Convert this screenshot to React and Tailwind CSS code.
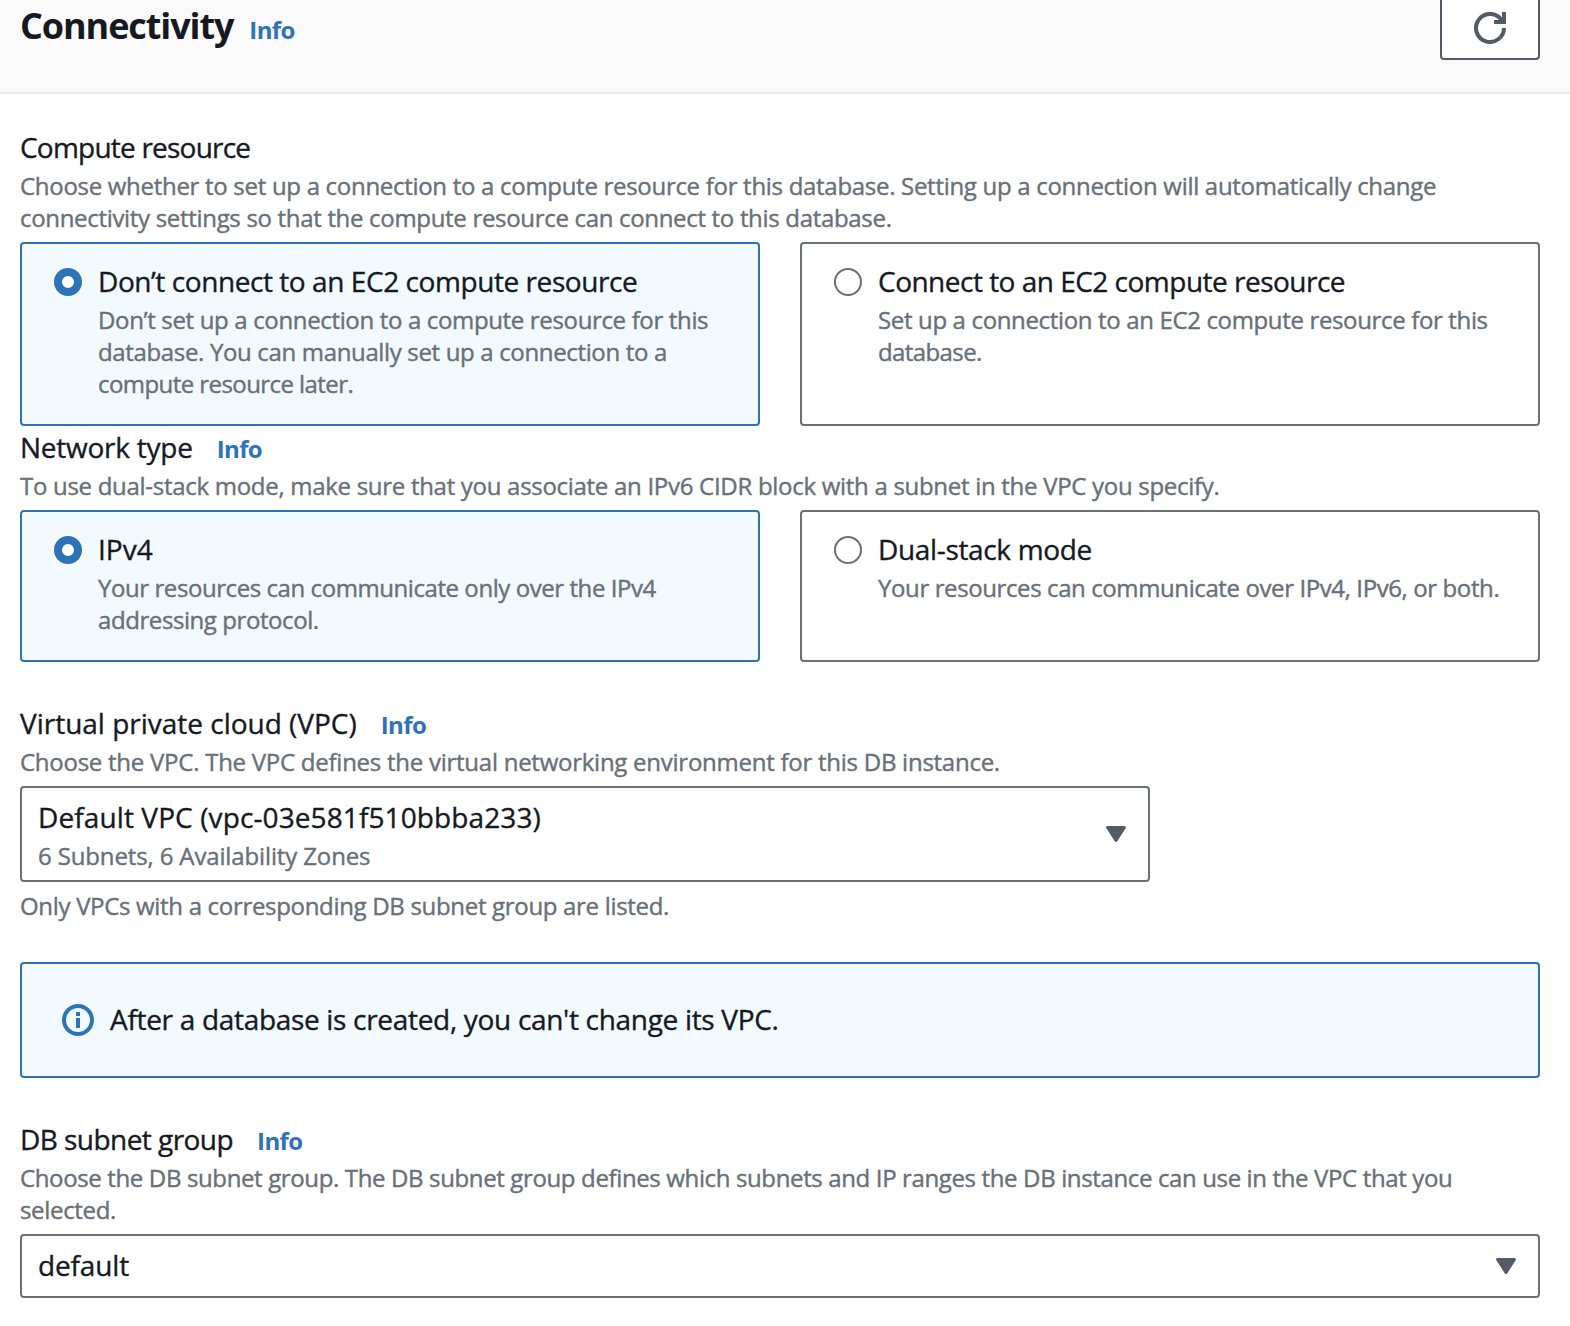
import React from "react";

function Info({ className = "ml-6" }) {
  return (
    <a className={`text-2xl leading-8 font-bold tracking-[-0.6px] text-[#2e73b8] ${className}`}>
      Info
    </a>
  );
}

function Label({ text, tracking, info }) {
  return (
    <div className="flex h-11 items-baseline leading-[42px] whitespace-nowrap">
      <span className={`[-webkit-text-stroke:0.35px] ${tracking}`}>{text}</span>
      {info && <Info />}
    </div>
  );
}

function Description({ lines, className = "" }) {
  return (
    <div
      className={`text-2xl leading-8 whitespace-nowrap text-[#687078] [-webkit-text-stroke:0.4px] ${className}`}
    >
      {lines.map(([text, tracking]) => (
        <p key={text} className={tracking}>
          {text}
        </p>
      ))}
    </div>
  );
}

function Tile({ title, tracking, lines, selected }) {
  return (
    <div
      className={`flex rounded-[4px] border-2 pt-4 pb-6 pl-8 ${
        selected ? "border-[#2e73b8] bg-[#f2fafd]" : "border-[#687078] bg-white"
      }`}
    >
      <span
        className={`mt-2 h-7 w-7 shrink-0 rounded-full bg-white ${
          selected ? "border-8 border-[#2e73b8]" : "border-2 border-[#687078]"
        }`}
      />
      <div className="ml-4">
        <Label text={title} tracking={tracking} />
        <Description lines={lines} />
      </div>
    </div>
  );
}

function Caret() {
  return (
    <svg viewBox="0 0 20 16" className="h-4 w-5 shrink-0">
      <path
        d="M1.6 1.5h16.8L10 14.5z"
        fill="#545b64"
        stroke="#545b64"
        strokeWidth="3"
        strokeLinejoin="round"
      />
    </svg>
  );
}

export default function App() {
  return (
    <div className="h-[1326px] w-[1570px] overflow-hidden bg-white font-['Open_Sans','Noto_Sans',sans-serif] text-[28px] text-[#16191f]">
      <header className="flex h-[94px] items-start justify-between border-b-2 border-[#ebebeb] bg-[#fafafa] pr-[30px] pl-5">
        <div className="flex items-baseline pt-[2px] whitespace-nowrap">
          <h2 className="text-4xl leading-[48px] font-bold tracking-[-1.1px]">Connectivity</h2>
          <Info className="ml-4" />
        </div>
        <button className="flex h-[60px] w-[100px] justify-center rounded-b-[4px] border-2 border-t-0 border-[#545b64] bg-white pt-3">
          <svg viewBox="0 0 32 32" className="h-8 w-8" fill="none" stroke="#545b64" strokeWidth="4">
            <path d="M30 16A14 14 0 1 1 27 7.3L29 10" />
            <path d="M30 0v10H20" />
          </svg>
        </button>
      </header>

      <main className="pt-8 pr-[30px] pl-5">
        <section>
          <Label text="Compute resource" tracking="tracking-[-0.78px]" />
          <Description
            lines={[
              [
                "Choose whether to set up a connection to a compute resource for this database. Setting up a connection will automatically change",
                "tracking-[-0.295px]",
              ],
              [
                "connectivity settings so that the compute resource can connect to this database.",
                "tracking-[-0.315px]",
              ],
            ]}
          />
          <div className="mt-2 grid grid-cols-2 gap-10">
            <Tile
              selected
              title="Don’t connect to an EC2 compute resource"
              tracking="tracking-[-0.43px]"
              lines={[
                ["Don’t set up a connection to a compute resource for this", "tracking-[-0.345px]"],
                ["database. You can manually set up a connection to a", "tracking-[-0.345px]"],
                ["compute resource later.", "tracking-[-0.57px]"],
              ]}
            />
            <Tile
              title="Connect to an EC2 compute resource"
              tracking="tracking-[-0.51px]"
              lines={[
                ["Set up a connection to an EC2 compute resource for this", "tracking-[-0.35px]"],
                ["database.", "tracking-[-0.6px]"],
              ]}
            />
          </div>
        </section>

        <section>
          <Label text="Network type" tracking="tracking-[-0.25px]" info />
          <Description
            lines={[
              [
                "To use dual-stack mode, make sure that you associate an IPv6 CIDR block with a subnet in the VPC you specify.",
                "tracking-[-0.29px]",
              ],
            ]}
          />
          <div className="mt-2 grid grid-cols-2 gap-10">
            <Tile
              selected
              title="IPv4"
              tracking="tracking-[0px]"
              lines={[
                ["Your resources can communicate only over the IPv4", "tracking-[-0.43px]"],
                ["addressing protocol.", "tracking-[-0.42px]"],
              ]}
            />
            <Tile
              title="Dual-stack mode"
              tracking="tracking-[-0.34px]"
              lines={[
                ["Your resources can communicate over IPv4, IPv6, or both.", "tracking-[-0.395px]"],
              ]}
            />
          </div>
        </section>

        <section className="mt-10">
          <Label text="Virtual private cloud (VPC)" tracking="tracking-[-0.01px]" info />
          <Description
            lines={[
              [
                "Choose the VPC. The VPC defines the virtual networking environment for this DB instance.",
                "tracking-[-0.255px]",
              ],
            ]}
          />
          <div className="mt-2 flex h-24 w-[1130px] items-center justify-between rounded-[4px] border-2 border-[#687078] pr-[22px] pl-4">
            <div>
              <Label text="Default VPC (vpc-03e581f510bbba233)" tracking="tracking-[0.105px]" />
              <Description lines={[["6 Subnets, 6 Availability Zones", "tracking-[-0.135px]"]]} />
            </div>
            <Caret />
          </div>
          <Description
            className="mt-2"
            lines={[
              ["Only VPCs with a corresponding DB subnet group are listed.", "tracking-[-0.315px]"],
            ]}
          />
        </section>

        <div className="mt-10 flex h-[116px] items-center rounded-[4px] border-2 border-[#2e73b8] bg-[#f2fafd] pl-10">
          <svg viewBox="0 0 32 32" className="h-8 w-8" fill="none" stroke="#2e73b8" strokeWidth="4">
            <circle cx="16" cy="16" r="14" />
            <path d="M16 14v10M16 8v4" />
          </svg>
          <div className="ml-4">
            <Label
              text="After a database is created, you can't change its VPC."
              tracking="tracking-[-0.31px]"
            />
          </div>
        </div>

        <section className="mt-10">
          <Label text="DB subnet group" tracking="tracking-[-0.55px]" info />
          <Description
            lines={[
              [
                "Choose the DB subnet group. The DB subnet group defines which subnets and IP ranges the DB instance can use in the VPC that you",
                "tracking-[-0.365px]",
              ],
              ["selected.", "tracking-[-0.33px]"],
            ]}
          />
          <div className="mt-2 flex h-16 items-center justify-between rounded-[4px] border-2 border-[#687078] pr-[22px] pl-4">
            <Label text="default" tracking="tracking-[-0.15px]" />
            <Caret />
          </div>
        </section>
      </main>
    </div>
  );
}
